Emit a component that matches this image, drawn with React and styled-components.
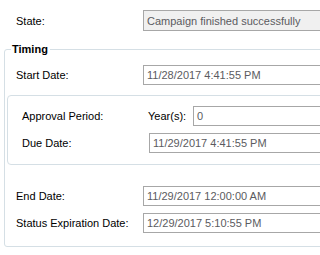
import React from "react";
import styled, { createGlobalStyle } from "styled-components";

const Global = createGlobalStyle`
  html, body {
    margin: 0;
    padding: 0;
    background: #ffffff;
  }
  body {
    font-family: "Liberation Sans", Arial, sans-serif;
    font-size: 11px;
    color: #000;
  }
`;

const Page = styled.div`
  width: 320px;
  height: 255px;
  overflow: hidden;
  padding-top: 10px;
  box-sizing: border-box;
`;

const Row = styled.div`
  display: flex;
  align-items: center;
  height: ${(p) => p.$h || 20}px;
  padding-left: ${(p) => p.$indent || 0}px;
  margin-top: ${(p) => p.$top || 0}px;
`;

const Label = styled.span`
  flex: none;
  width: ${(p) => p.$w || 127}px;
  white-space: nowrap;
`;

const SubLabel = styled.span`
  flex: none;
  width: 45px;
  white-space: nowrap;
`;

const Field = styled.div`
  flex: none;
  width: ${(p) => p.$w || 220}px;
  height: 100%;
  box-sizing: border-box;
  border: 1px solid #a7a7a7;
  background: ${(p) => (p.$disabled ? "#f0f0f0" : "#ffffff")};
  color: #5b5b60;
  padding-left: 3px;
  display: flex;
  align-items: center;
  white-space: nowrap;
`;

const Group = styled.fieldset`
  margin: 12px 0 0 4px;
  width: 400px;
  box-sizing: border-box;
  border: 1px solid #d5dfe5;
  border-radius: 3px;
  padding: 9px 0 13px 2px;
`;

const Legend = styled.legend`
  font-weight: bold;
  font-size: 11px;
  line-height: 13px;
  padding: 0 2px 0 1px;
  margin-left: 4px;
`;

const Inner = styled.div`
  margin: 10px 0 0 0;
  width: 380px;
  border: 1px solid #d5dfe5;
  border-radius: 4px;
  padding: 10px 0 11px 14px;
`;

export default function App() {
  return (
    <Page>
      <Global />
      <Row $h={21} $indent={16}>
        <Label>State:</Label>
        <Field $disabled>Campaign finished successfully</Field>
      </Row>
      <Group>
        <Legend>Timing</Legend>
        <Row $indent={9}>
          <Label>Start Date:</Label>
          <Field>11/28/2017 4:41:55 PM</Field>
        </Row>
        <Inner>
          <Row>
            <Label $w={126}>Approval Period:</Label>
            <SubLabel>Year(s):</SubLabel>
            <Field>0</Field>
          </Row>
          <Row $top={7}>
            <Label>Due Date:</Label>
            <Field>11/29/2017 4:41:55 PM</Field>
          </Row>
        </Inner>
        <Row $indent={9} $top={21}>
          <Label>End Date:</Label>
          <Field>11/29/2017 12:00:00 AM</Field>
        </Row>
        <Row $indent={9} $top={7}>
          <Label>Status Expiration Date:</Label>
          <Field>12/29/2017 5:10:55 PM</Field>
        </Row>
      </Group>
    </Page>
  );
}
